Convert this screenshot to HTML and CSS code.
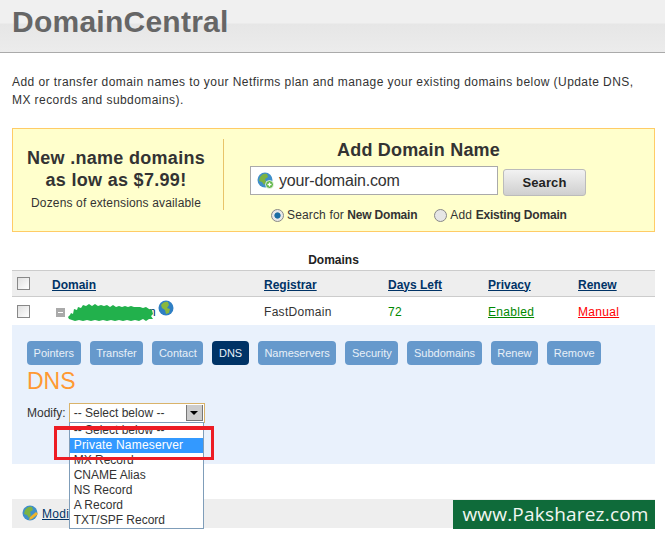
FILE: index.html
```html
<!DOCTYPE html>
<html lang="en">
<head>
<meta charset="utf-8">
<title>DomainCentral</title>
<link rel="stylesheet" href="styles.css">
</head>
<body>
<header class="page-head"><h1>DomainCentral</h1></header>
<p class="intro">Add or transfer domain names to your Netfirms plan and manage your existing domains below (Update DNS, MX records and subdomains).</p>

<section class="promo">
  <div class="promo-left">
    <div class="promo-title">New .name domains<br>as low as $7.99!</div>
    <div class="promo-sub">Dozens of extensions available</div>
  </div>
  <div class="promo-right">
    <div class="add-title">Add Domain Name</div>
    <div class="search-row">
      <div class="search-input">
        <svg class="globe-add" width="17" height="17" viewBox="0 0 17 17"><circle cx="8" cy="8" r="7.5" fill="#3f8fc9"/><path d="M3 5c2-3 5-4 7-3l1 3-3 2 1 3-2 3-2-3-3-1z" fill="#7cb342"/><circle cx="12.5" cy="12.5" r="4" fill="#5fb548" stroke="#fff" stroke-width=".8"/><path d="M12.5 10.5v4M10.500 12.500h4" stroke="#fff" stroke-width="1.300"/></svg>
        <span>your-domain.com</span>
      </div>
      <div class="search-btn">Search</div>
    </div>
    <div class="radios">
      <span class="radio-item"><i class="radio on"></i>Search for <b>New Domain</b></span>
      <span class="radio-item"><i class="radio"></i>Add <b>Existing Domain</b></span>
    </div>
  </div>
</section>

<div class="table-title">Domains</div>
<div class="row head-row">
  <div class="c-check"><i class="check"></i></div>
  <div class="c-domain"><a>Domain</a></div>
  <div class="c-reg"><a>Registrar</a></div>
  <div class="c-days"><a>Days Left</a></div>
  <div class="c-priv"><a>Privacy</a></div>
  <div class="c-renew"><a>Renew</a></div>
</div>
<div class="row body-row">
  <div class="c-check"><i class="check"></i></div>
  <div class="c-domain domain-cell">
    <i class="minus"></i>
    <span class="scribble">
      <span class="scribble-end">n</span>
      <svg class="scribble-mark" width="85" height="17" viewBox="0 0 85 17" preserveAspectRatio="none"><path d="M0 13 2 11 3 9 5 10 6 5 9 6 10 3 13 4 15 1 18 2 21 0 24 2 27 0 30 2 33 1 36 2 39 1 42 3 45 1 48 3 51 2 54 3 57 2 60 3 63 2 66 3 69 3 72 3 75 4 78 3 81 5 84 6 85 10 83 12 85 15 81 15 78 17 75 15 71 17 67 16 63 17 59 16 55 17 51 16 47 17 43 16 39 17 35 16 31 17 27 16 23 17 19 16 15 17 11 16 7 17 4 16 1 15z" fill="#22b14c"/></svg>
    </span>
    <svg class="globe" width="16" height="16" viewBox="0 0 16 16"><circle cx="8" cy="8" r="7.500" fill="#2f7fc4"/><path d="M3 5c2-3 5-4 7-3l1 3-2 3 3 1-1 4-3 1-1-4-3-2z" fill="#8ab83c"/></svg>
  </div>
  <div class="c-reg">FastDomain</div>
  <div class="c-days days">72</div>
  <div class="c-priv"><a class="green">Enabled</a></div>
  <div class="c-renew"><a class="red">Manual</a></div>
</div>

<section class="panel">
  <nav class="tabs">
    <span class="tab">Pointers</span>
    <span class="tab">Transfer</span>
    <span class="tab">Contact</span>
    <span class="tab active">DNS</span>
    <span class="tab">Nameservers</span>
    <span class="tab">Security</span>
    <span class="tab">Subdomains</span>
    <span class="tab">Renew</span>
    <span class="tab">Remove</span>
  </nav>
  <h2>DNS</h2>
  <div class="modify">
    <span>Modify:</span>
    <div class="select">
      <span>-- Select below --</span>
      <i class="select-arrow"></i>
      <ul class="options">
        <li>-- Select below --</li>
        <li class="selected">Private Nameserver</li>
        <li>MX Record</li>
        <li>CNAME Alias</li>
        <li>NS Record</li>
        <li>A Record</li>
        <li>TXT/SPF Record</li>
      </ul>
      <div class="highlight"></div>
    </div>
  </div>
</section>

<div class="foot-bar">
  <svg class="pencil-globe" width="17" height="17" viewBox="0 0 17 17"><circle cx="8" cy="8" r="7.500" fill="#3f8fc9"/><path d="M3 5c2-3 5-4 7-3l1 3-3 2 1 3-2 3-2-3-3-1z" fill="#7cb342"/><path d="M7 15l1-3 6-5 2 2-6 5z" fill="#f0b429"/></svg>
  <a>Modify</a>
  <div class="stamp">www.Paksharez.com</div>
</div>
</body>
</html>
```
FILE: styles.css
```css
html, body { margin: 0; padding: 0; background: #fff; }
body { font-family: "Liberation Sans", Arial, sans-serif; font-size: 12px; letter-spacing: .3px; color: #333; width: 665px; height: 538px; overflow: hidden; position: relative; }

.page-head { height: 52px; border-bottom: 1px solid #aaa; background: linear-gradient(#f0f0f0 0, #f0f0f0 23px, #e6e6e6 24px, #ececec 52px); }
.page-head h1 { margin: 0; padding: 3px 0 0 12px; font-size: 30px; letter-spacing: .25px; line-height: 38px; font-weight: bold; color: #666; }

.intro { margin: 20px 12px 0; width: 630px; line-height: 18px; letter-spacing: .43px; color: #333; }

.promo { margin: 19px 10px 0 12px; height: 102px; background: #ffc; border: 1px solid #fc6; display: flex; }
.promo-left { width: 211px; padding: 8px 4px 0 0; box-sizing: border-box; margin-top: 10px; height: 71px; border-right: 1px solid #e8c46a; text-align: center; }
.promo-title { font-size: 18px; line-height: 22px; letter-spacing: .3px; font-weight: bold; color: #333; white-space: nowrap; }
.promo-sub { margin-top: 4px; line-height: 16px; letter-spacing: .15px; white-space: nowrap; }
.promo-right { flex: 1; display: flex; flex-direction: column; }
.add-title { margin: 10px 0 0 0; width: 389px; text-align: center; font-size: 18px; letter-spacing: .2px; line-height: 22px; font-weight: bold; color: #333; }
.search-row { display: flex; margin: 5px 0 0 26px; align-items: flex-start; gap: 5px; }
.search-input { width: 248px; height: 29px; border: 1px solid #aaa; background: #fff; display: flex; align-items: center; gap: 5px; padding-left: 6px; box-sizing: border-box; font-size: 16px; letter-spacing: -.2px; color: #333; }
.search-btn { width: 83px; height: 27px; margin-top: 3px; box-sizing: border-box; border: 1px solid #bbb; border-radius: 3px; background: linear-gradient(#f2f2f2, #cfcfcf); text-align: center; font-size: 13px; letter-spacing: .1px; font-weight: bold; line-height: 25px; color: #222; }
.radios { display: flex; margin: 11px 0 0 47px; gap: 17px; line-height: 16px; letter-spacing: .15px; }
.radio-item { display: flex; align-items: center; white-space: pre; }
.radio-item b { letter-spacing: -.2px; }
.radio { width: 11px; height: 11px; border-radius: 50%; border: 1px solid #888; background: #e6e6e6; margin-right: 3px; }
.radio.on { background: radial-gradient(#1c6ea4 0, #1c6ea4 35%, #e8e8e8 45%); }

.table-title { margin: 20px 0 0 2px; text-align: center; font-weight: bold; letter-spacing: 0; color: #222; line-height: 16px; }

.row { margin: 0 10px 0 12px; display: flex; }
.head-row { margin-top: 2px; height: 25px; background: #eee; border-top: 1px solid #ccc; border-bottom: 1px solid #ccc; align-items: center; font-weight: bold; letter-spacing: 0; }
.body-row { height: 28px; align-items: center; color: #333; }
.row a { color: #036; text-decoration: underline; }
.c-check { width: 40px; display: flex; padding-left: 5px; box-sizing: border-box; }
.c-domain { width: 212px; }
.c-reg { width: 124px; }
.c-days { width: 100px; }
.c-priv { width: 90px; }
.c-renew { width: 70px; }
.head-row .c-domain, .head-row .c-reg, .head-row .c-days, .head-row .c-priv, .head-row .c-renew { padding-top: 2px; }
.body-row .c-reg, .body-row .c-days, .body-row .c-priv, .body-row .c-renew { padding-top: 2px; }
.check { width: 11px; height: 11px; border: 1px solid #888; background: linear-gradient(135deg, #e0e0e0, #fff); }
.days { color: #080; }
.row a.green { color: #080; }
.row a.red { color: #f00; }
.domain-cell { display: flex; align-items: center; padding-left: 4px; box-sizing: border-box; }
.minus { width: 9px; height: 9px; background: #aaa; position: relative; margin-top: 3px; flex: none; }
.minus::after { content: ""; position: absolute; left: 2px; right: 2px; top: 4px; height: 1px; background: #fff; }
.scribble { display: flex; width: 88px; height: 17px; margin: 3px 0 0 3px; position: relative; }
.scribble-end { position: absolute; right: 0; top: 1px; color: #036; }
.scribble-mark { position: absolute; left: 0; top: 0; }
.globe { margin: -7px 0 0 2px; flex: none; }

.panel { margin: 0 10px 0 12px; height: 139px; background: #e9f1fc; position: relative; }
.tabs { display: flex; padding: 16px 0 0 15px; gap: 9px; }
.tab { height: 24px; padding: 0 6.6px; border-radius: 4px; background: #69c; color: #e8f0f8; font-size: 11px; letter-spacing: 0; line-height: 24px; }
.tab.active { background: #036; }
.panel h2 { margin: 1px 0 0 15px; font-size: 23px; letter-spacing: 0; line-height: 30px; font-weight: normal; color: #f93; }
.modify { display: flex; margin: 7px 0 0 15px; align-items: center; line-height: 16px; gap: 3px; letter-spacing: 0; }
.select { width: 130px; height: 18px; border: 1px solid #d9b36a; background: #fff; position: relative; display: flex; align-items: center; padding-left: 4px; }
.select-arrow { position: absolute; right: 1px; top: 1px; width: 15px; height: 15px; background: #ccc; border: 1px solid #777; border-width: 0 1px 1px 1px; box-sizing: content-box; }
.select-arrow::after { content: ""; position: absolute; left: 3px; top: 6px; border: 4px solid transparent; border-top: 4px solid #000; border-bottom: 0; }
.options { position: absolute; left: -1px; top: 18px; width: 133px; margin: 0; padding: 0; list-style: none; background: #fff; border: 1px solid #7f9db9; height: 105px; overflow: hidden; z-index: 2; }
.options li { height: 15px; line-height: 15px; padding-left: 4px; color: #333; }
.options li.selected { background: #39f; color: #fff; letter-spacing: .2px; }
.highlight { position: absolute; left: -16px; top: 22px; width: 160px; height: 34px; box-sizing: border-box; border: 3px solid #ed1c24; border-top-width: 4px; z-index: 3; }

.foot-bar { position: absolute; left: 12px; top: 499px; width: 643px; height: 29px; background: #eee; display: flex; align-items: center; padding-left: 10px; box-sizing: border-box; gap: 3px; }
.foot-bar a { color: #036; text-decoration: underline; }
.stamp { position: absolute; right: 0; top: 1px; width: 202px; height: 29px; background: #0f6b3a; color: #f2f7f2; font-family: "Open Sans", sans-serif; font-size: 19px; letter-spacing: .2px; line-height: 28px; padding-left: 3px; box-sizing: border-box; text-align: center; }
```
